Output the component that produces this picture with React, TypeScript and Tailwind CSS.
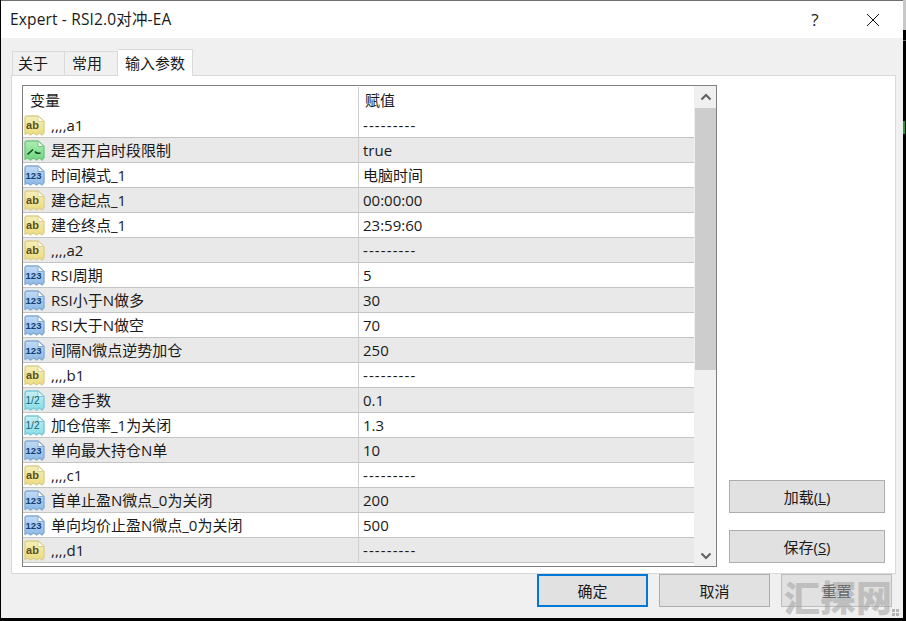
const font = '"Open Sans","Noto Sans CJK SC",sans-serif';

type Kind = "ab" | "sw" | "num" | "half";
const rows: [Kind, string, string][] = [
  ["ab", ",,,,a1", "---------"],
  ["sw", "是否开启时段限制", "true"],
  ["num", "时间模式_1", "电脑时间"],
  ["ab", "建仓起点_1", "00:00:00"],
  ["ab", "建仓终点_1", "23:59:60"],
  ["ab", ",,,,a2", "---------"],
  ["num", "RSI周期", "5"],
  ["num", "RSI小于N做多", "30"],
  ["num", "RSI大于N做空", "70"],
  ["num", "间隔N微点逆势加仓", "250"],
  ["ab", ",,,,b1", "---------"],
  ["half", "建仓手数", "0.1"],
  ["half", "加仓倍率_1为关闭", "1.3"],
  ["num", "单向最大持仓N单", "10"],
  ["ab", ",,,,c1", "---------"],
  ["num", "首单止盈N微点_0为关闭", "200"],
  ["num", "单向均价止盈N微点_0为关闭", "500"],
  ["ab", ",,,,d1", "---------"],
];

const palette: Record<Kind, { top: string; bottom: string; stroke: string; text: string }> = {
  ab: { top: "#f6efb8", bottom: "#ecdc80", stroke: "#dcd08e", text: "#57501e" },
  sw: { top: "#aeeeb4", bottom: "#6fd67e", stroke: "#78c585", text: "#0f4a1b" },
  num: { top: "#c2dcf6", bottom: "#8cb8e6", stroke: "#86abd2", text: "#123f72" },
  half: { top: "#c4f0f4", bottom: "#86dde8", stroke: "#7cc8d4", text: "#1a5a6c" },
};

function RowIcon({ kind }: { kind: Kind }) {
  const p = palette[kind];
  const id = `icon-grad-${kind}`;
  return (
    <svg width="21" height="21" viewBox="0 0 21 21" className="shrink-0">
      <defs>
        <linearGradient id={id} x1="0" y1="0" x2="0" y2="1">
          <stop offset="0" stopColor={p.top} />
          <stop offset="1" stopColor={p.bottom} />
        </linearGradient>
      </defs>
      <path
        d="M1 3 Q1 1 3 1 H14 L20 6.5 V17.5 L18 20 L15.5 18 L12.5 20 L9.5 18 L6.5 20 L3.5 18 L1 19.5 Z"
        fill={`url(#${id})`}
        stroke={p.stroke}
        strokeWidth="1.4"
        strokeLinejoin="round"
      />
      <path d="M14 1 V6.5 H20 Z" fill="#ffffff" stroke={p.stroke} strokeLinejoin="round" />
      {kind === "sw" ? (
        <path d="M3.5 14.5 L9 9.5 M11 11.5 Q12.5 14 16.5 13" fill="none" stroke={p.text} strokeWidth="1.6" />
      ) : (
        <text
          x={kind === "num" ? 9.5 : 8.5}
          y="14"
          textAnchor="middle"
          fontFamily='"Liberation Sans",sans-serif'
          fontWeight={kind === "half" ? 400 : 700}
          fontSize={kind === "ab" ? 11 : kind === "num" ? 9.5 : 10}
          fill={p.text}
        >
          {kind === "ab" ? "ab" : kind === "num" ? "123" : "1/2"}
        </text>
      )}
    </svg>
  );
}

function Btn({ children, w, primary, disabled }: { children: React.ReactNode; w: string; primary?: boolean; disabled?: boolean }) {
  return (
    <div
      className={`${w} h-[33px] flex items-center justify-center bg-[#e1e1e1] text-[15px] pt-px ${
        primary ? "border-2 border-[#0078d7]" : disabled ? "border border-[#bcbcbc] text-[#666666]" : "border border-[#adadad]"
      }`}
    >
      {disabled ? <span className="relative z-10">{children}</span> : children}
    </div>
  );
}

export default function App() {
  return (
    <div className="w-[906px] h-[621px] bg-black overflow-hidden text-[#1a1a1a] flex" style={{ fontFamily: font }}>
      <div className="relative w-[902px] h-[618px] ml-px shrink-0 bg-[#f0f0f0] border-t border-[#707070] flex flex-col">
        <div className="h-[37px] shrink-0 bg-white flex items-center pl-[9px] text-[15.5px] tracking-[0.15px]">
          <span className="flex-1">Expert - RSI2.0对冲-EA</span>
          <span className="w-[20px] text-center mr-[41px] text-[17px]">?</span>
          <svg width="14" height="14" viewBox="0 0 14 14" className="mr-[23px]">
            <path d="M1 1 L13 13 M13 1 L1 13" stroke="#111" strokeWidth="1" />
          </svg>
        </div>

        <div className="flex items-end pl-[11px] mt-[11px] h-[26px] shrink-0 text-[15px]">
          <div className="h-[24px] w-[53px] bg-[#f0f0f0] border border-b-0 border-[#d9d9d9] flex items-center pl-[5px]">关于</div>
          <div className="h-[24px] w-[53px] bg-[#f0f0f0] border border-l-0 border-b-0 border-[#d9d9d9] flex items-center pl-[7px]">常用</div>
          <div className="relative z-10 h-[27px] -mb-px w-[75px] bg-white border border-l-0 border-b-0 border-[#d9d9d9] flex items-center justify-center">输入参数</div>
        </div>

        <div className="mx-[10px] w-[885px] h-[499px] shrink-0 bg-white border border-[#d9d9d9] pl-[10px] pt-[9px] flex">
          <div className="w-[695px] h-[482px] border border-[#808080] flex shrink-0 bg-white">
            <div className="w-[671px] shrink-0 text-[15px]">
              <div className="h-[27px] flex items-center pt-px">
                <div className="w-[335px] pl-[7px]">变量</div>
                <div className="pl-[6px] border-l border-[#d0d0d0] h-full flex items-center flex-1">赋值</div>
              </div>
              {rows.map(([k, name, val], i) => (
                <div key={i} className={`h-[25px] flex items-center border-b border-[#c4c4c4] ${i % 2 ? "bg-[#e9e9e9]" : "bg-white"}`}>
                  <div className="w-[335px] flex items-center pl-[1px] gap-[6px] h-full">
                    <RowIcon kind={k} />
                    <span className="whitespace-nowrap pt-px">{name}</span>
                  </div>
                  <div className={`pl-[4px] pt-px border-l border-[#d0d0d0] h-full flex items-center flex-1 whitespace-nowrap ${val.startsWith("-") ? "tracking-[1.1px]" : ""}`}>{val}</div>
                </div>
              ))}
            </div>
            <div className="flex-1 bg-[#f0f0f0] flex flex-col items-center pl-px">
              <div className="h-[22px] w-full flex items-center justify-center shrink-0">
                <svg width="12" height="8" viewBox="0 0 12 8"><path d="M1.5 6.5 L6 2 L10.5 6.5" fill="none" stroke="#606060" strokeWidth="2" /></svg>
              </div>
              <div className="w-full h-[262px] bg-[#cdcdcd] shrink-0" />
              <div className="flex-1" />
              <div className="h-[20px] w-full flex items-center justify-center shrink-0">
                <svg width="12" height="8" viewBox="0 0 12 8"><path d="M1.5 1.5 L6 6 L10.5 1.5" fill="none" stroke="#606060" strokeWidth="2" /></svg>
              </div>
            </div>
          </div>
          <div className="flex-1 flex flex-col items-start pl-[12px] pt-[395px] gap-[17px]">
            <Btn w="w-[156px]">加载(<u>L</u>)</Btn>
            <Btn w="w-[156px]">保存(<u>S</u>)</Btn>
          </div>
        </div>

        <div className="flex pl-[536px] gap-[11px]">
          <Btn w="w-[111px]" primary>确定</Btn>
          <Btn w="w-[111px]">取消</Btn>
          <Btn w="w-[111px]" disabled>重置</Btn>
        </div>

        <div className="absolute left-[783px] top-[576px] text-[36px] leading-[44px] font-black text-[#a8a8a8] opacity-60 whitespace-nowrap">汇探网</div>
        <svg width="8" height="8" viewBox="0 0 8 8" className="absolute left-[891px] top-[608px]">
          <path d="M0 0h3v3h-3z M4 0h3v3h-3z M0 4h3v3h-3z M4 4h3v3h-3z" fill="#b5b5b5" />
        </svg>
      </div>
      <div className="flex-1 flex flex-col">
        <div className="h-[30px] bg-[#c8c8c8]" />
        <div className="h-[1px] mt-[10px] bg-[#666666]" />
        <div className="h-[13px] w-[2px] mt-[80px] bg-[#1f9a2e]" />
      </div>
    </div>
  );
}
